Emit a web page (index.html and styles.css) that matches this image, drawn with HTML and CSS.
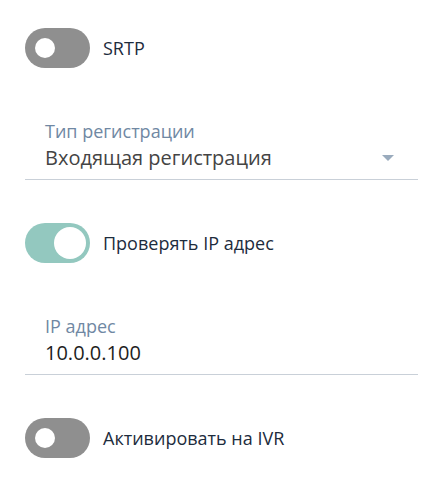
FILE: index.html
```html
<!DOCTYPE html>
<html lang="ru">
<head>
    <meta charset="UTF-8">
    <meta name="viewport" content="width=device-width, initial-scale=1.0">
    <title>Настройки линии</title>
    <link rel="stylesheet" href="styles.css">
</head>
<body>
    <div class="settings">
        <label class="toggle-row">
            <span class="switch"><span class="knob"></span></span>
            <span class="toggle-text">SRTP</span>
        </label>

        <div class="field">
            <div class="field-label">Тип регистрации</div>
            <div class="field-control">
                <span class="field-value select-value">Входящая регистрация</span>
                <span class="arrow"></span>
            </div>
        </div>

        <label class="toggle-row">
            <span class="switch on"><span class="knob"></span></span>
            <span class="toggle-text">Проверять IP адрес</span>
        </label>

        <div class="field">
            <div class="field-label">IP адрес</div>
            <div class="field-control">
                <span class="field-value">10.0.0.100</span>
            </div>
        </div>

        <label class="toggle-row">
            <span class="switch"><span class="knob"></span></span>
            <span class="toggle-text">Активировать на IVR</span>
        </label>
    </div>
</body>
</html>
```

FILE: styles.css
```css
body {
    margin: 0;
    font-family: 'Open Sans', 'Noto Sans', sans-serif;
    background-color: #ffffff;
}

.settings {
    width: 393px;
    padding: 28px 0 0 25px;
    display: flex;
    flex-direction: column;
}

/* Toggles */
.toggle-row {
    display: flex;
    align-items: center;
    gap: 13px;
    height: 40px;
    cursor: pointer;
}

.toggle-row + .field {
    margin-top: 51px;
}

.field + .toggle-row {
    margin-top: 43px;
}

.switch {
    position: relative;
    flex: none;
    width: 65px;
    height: 40px;
    border-radius: 20px;
    background-color: #8f8f8f;
}

.switch .knob {
    position: absolute;
    top: 10px;
    left: 10px;
    width: 20px;
    height: 20px;
    border-radius: 50%;
    background-color: #ffffff;
}

.switch.on {
    background-color: #93c8bf;
}

.switch.on .knob {
    top: 4px;
    left: auto;
    right: 4px;
    width: 32px;
    height: 32px;
}

.toggle-text {
    font-size: 18px;
    color: #1d2c3d;
}

/* Fields */
.field-label {
    font-size: 18px;
    line-height: 24px;
    color: #7088a3;
    padding-left: 20px;
}

.field-control {
    display: flex;
    align-items: center;
    padding: 1px 0 7px 20px;
    border-bottom: 1px solid #c9d0d8;
}

.field-value {
    flex: 1;
    font-size: 20px;
    line-height: 28px;
    color: #1e1e1e;
}

.select-value {
    color: #444444;
}

.arrow {
    width: 0;
    height: 0;
    margin-right: 24px;
    border-left: 6.5px solid transparent;
    border-right: 6.5px solid transparent;
    border-top: 6px solid #9aabbd;
}
```
